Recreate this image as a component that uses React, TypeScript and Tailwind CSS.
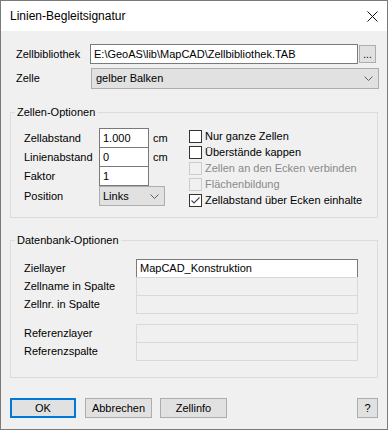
import React from 'react';

const Chevron = () => (
  <svg width="9" height="5" viewBox="0 0 9 5" className="shrink-0">
    <path d="M0.5 0.5 L4.5 4.5 L8.5 0.5" fill="none" stroke="#606060" strokeWidth="1" />
  </svg>
);

const CheckBox = ({ label, checked = false, disabled = false }: { label: string; checked?: boolean; disabled?: boolean }) => (
  <div className="flex h-[16px] items-center">
    <div
      className={`flex h-[13px] w-[13px] shrink-0 items-center justify-center border ${
        disabled ? 'border-[#cccccc] bg-[#f0f0f0]' : 'border-[#333333] bg-white'
      }`}
    >
      {checked && (
        <svg width="11" height="11" viewBox="0 0 11 11">
          <path d="M1.5 5.5 L4 8 L9.5 2.5" fill="none" stroke="#444" strokeWidth="1.1" />
        </svg>
      )}
    </div>
    <span className={`ml-[3px] whitespace-nowrap ${disabled ? 'text-[#8a8a8a]' : 'text-black'}`}>{label}</span>
  </div>
);

const DbRow = ({ label, value, enabled = false, first = false }: { label: string; value?: string; enabled?: boolean; first?: boolean }) => (
  <div className={`flex items-center ${first ? '' : '-mt-px'}`}>
    <span className="w-[112px] shrink-0">{label}</span>
    <div
      className={`flex h-[19px] w-[222px] items-center border px-[3px] ${
        enabled ? 'border-[#7a7a7a] bg-white' : 'border-[#d9d9d9] bg-[#f0f0f0]'
      }`}
    >
      {value}
    </div>
  </div>
);

export default function App() {
  return (
    <div
      className="flex h-[430px] w-[388px] flex-col border border-[#7a7a7a] bg-[#f0f0f0] text-[11px] text-black"
      style={{ fontFamily: '"Liberation Sans", Arial, sans-serif' }}
    >
      {/* title bar */}
      <div className="flex h-[30px] shrink-0 items-center justify-between bg-white pl-[9px] pr-[9px]">
        <span className="text-[12px]">Linien-Begleitsignatur</span>
        <svg width="11" height="11" viewBox="0 0 11 11">
          <path d="M0.5 0.5 L10.5 10.5 M10.5 0.5 L0.5 10.5" stroke="#111" strokeWidth="1" />
        </svg>
      </div>

      <div className="flex flex-col pl-[9px] pt-[13px]">
        {/* Zellbibliothek */}
        <div className="flex items-center">
          <span className="w-[80px] shrink-0 pl-[6px]">Zellbibliothek</span>
          <div className="flex h-[20px] w-[268px] items-center border border-[#7a7a7a] bg-white px-[3px]">
            E:\GeoAS\lib\MapCAD\Zellbibliothek.TAB
          </div>
          <div className="ml-[1px] flex h-[18px] w-[17px] items-end justify-center border border-[#adadad] bg-[#e1e1e1] pb-[2px] text-[10px] leading-[10px]">
            ...
          </div>
        </div>

        {/* Zelle */}
        <div className="mt-[4px] flex items-center">
          <span className="w-[81px] shrink-0 pl-[6px]">Zelle</span>
          <div className="flex h-[21px] w-[288px] items-center justify-between border border-[#adadad] bg-[#e1e1e1] pl-[4px] pr-[5px]">
            <span>gelber Balken</span>
            <Chevron />
          </div>
        </div>

        {/* Zellen-Optionen */}
        <fieldset className="mt-[16px] w-[368px] border border-[#dcdcdc] pb-[9px]">
          <legend className="ml-[4px] px-[2px] leading-[14px]">Zellen-Optionen</legend>
          <div className="flex pl-[13px] pt-[9px]">
            <div className="flex w-[165px] shrink-0 flex-col">
              <div className="flex items-center">
                <span className="w-[75px] shrink-0">Zellabstand</span>
                <div className="flex h-[20px] w-[50px] items-center border border-[#7a7a7a] bg-white px-[3px]">1.000</div>
                <span className="ml-[4px]">cm</span>
              </div>
              <div className="-mt-px flex items-center">
                <span className="w-[75px] shrink-0">Linienabstand</span>
                <div className="flex h-[20px] w-[50px] items-center border border-[#7a7a7a] bg-white px-[3px]">0</div>
                <span className="ml-[4px]">cm</span>
              </div>
              <div className="-mt-px flex items-center">
                <span className="w-[75px] shrink-0">Faktor</span>
                <div className="flex h-[20px] w-[50px] items-center border border-[#7a7a7a] bg-white px-[3px]">1</div>
              </div>
              <div className="flex items-center">
                <span className="w-[75px] shrink-0">Position</span>
                <div className="flex h-[20px] w-[66px] items-center justify-between border border-[#adadad] bg-[#e1e1e1] pl-[3px] pr-[5px]">
                  <span>Links</span>
                  <Chevron />
                </div>
              </div>
            </div>
            <div className="flex flex-col">
              <CheckBox label="Nur ganze Zellen" />
              <CheckBox label="Überstände kappen" />
              <CheckBox label="Zellen an den Ecken verbinden" disabled />
              <CheckBox label="Flächenbildung" disabled />
              <CheckBox label="Zellabstand über Ecken einhalte" checked />
            </div>
          </div>
        </fieldset>

        {/* Datenbank-Optionen */}
        <fieldset className="mt-[15px] w-[368px] border border-[#dcdcdc] pb-[16px]">
          <legend className="ml-[4px] px-[2px] leading-[14px]">Datenbank-Optionen</legend>
          <div className="flex flex-col pl-[13px] pt-[12px]">
            <DbRow label="Ziellayer" value="MapCAD_Konstruktion" enabled first />
            <DbRow label="Zellname in Spalte" />
            <DbRow label="Zellnr. in Spalte" />
            <div className="mt-[10px]" />
            <DbRow label="Referenzlayer" first />
            <DbRow label="Referenzspalte" />
          </div>
        </fieldset>

        {/* buttons */}
        <div className="mt-[20px] flex w-[368px] items-center">
          <div className="flex h-[20px] w-[66px] items-center justify-center border-2 border-[#0078d7] bg-[#e1e1e1]">OK</div>
          <div className="ml-[9px] flex h-[20px] w-[67px] items-center justify-center border border-[#adadad] bg-[#e1e1e1]">Abbrechen</div>
          <div className="ml-[8px] flex h-[20px] w-[67px] items-center justify-center border border-[#adadad] bg-[#e1e1e1]">Zellinfo</div>
          <div className="ml-auto flex h-[20px] w-[21px] items-center justify-center border border-[#adadad] bg-[#e1e1e1]">?</div>
        </div>
      </div>
    </div>
  );
}
